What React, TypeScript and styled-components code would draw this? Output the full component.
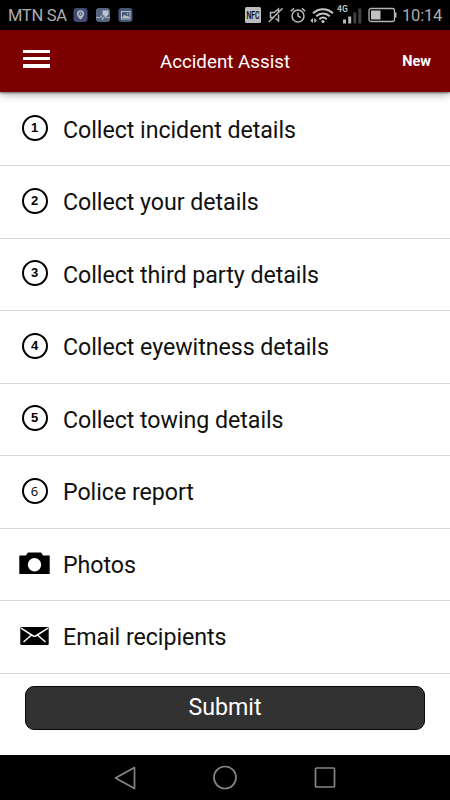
import React from "react";
import styled, { createGlobalStyle } from "styled-components";

const GlobalStyle = createGlobalStyle`
  * { box-sizing: border-box; }
  body { margin: 0; background: #fff; font-family: Roboto, "Liberation Sans", sans-serif; }
  svg { display: block; flex: none; overflow: visible; }
`;

const Screen = styled.div`
  width: 450px;
  height: 800px;
  display: flex;
  flex-direction: column;
  overflow: hidden;
  background: #fff;
`;

const StatusBar = styled.div`
  height: 30px;
  flex: none;
  display: flex;
  align-items: center;
  justify-content: space-between;
  padding: 0 7px 0 8px;
  background: #000;
  color: #adadad;
  font-size: 16.5px;
`;

const Notifications = styled.div`
  display: flex;
  align-items: center;
`;

const Carrier = styled.span`
  width: 65px;
  padding-top: 2px;
  line-height: 20px;
  white-space: nowrap;
  letter-spacing: -0.3px;
`;

const Clock = styled.span`
  width: 41px;
  margin-left: 5px;
  padding-top: 2px;
  line-height: 20px;
  white-space: nowrap;
  letter-spacing: -0.2px;
`;

const Header = styled.header`
  height: 62px;
  flex: none;
  display: grid;
  grid-template-columns: 100px 1fr 100px;
  align-items: center;
  position: relative;
  background: #7c0000;
  color: #fff;
  box-shadow: 0 1px 2px rgba(0, 0, 0, 0.5), 0 2px 9px rgba(0, 0, 0, 0.35);
`;

const MenuButton = styled.button`
  border: 0;
  padding: 0 0 4px 23px;
  background: none;
`;

const Title = styled.h1`
  margin: 0;
  padding-top: 2px;
  text-align: center;
  font-size: 18.8px;
  font-weight: 400;
  line-height: 24px;
`;

const NewButton = styled.button`
  border: 0;
  padding: 2px 19px 0 0;
  background: none;
  color: #fff;
  text-align: right;
  font: 700 14.5px/20px Roboto, sans-serif;
`;

const List = styled.ul`
  margin: 0;
  padding: 1.5px 0 0;
  list-style: none;
`;

const Item = styled.li`
  height: 72.5px;
  display: grid;
  grid-template-columns: 63px 1fr;
  align-items: center;
  border-bottom: 1px solid #d8d8d8;
  color: #111;
`;

const Symbol = styled.span`
  padding: 0 0 2px 6px;
  display: flex;
  justify-content: center;
`;

const NumberRing = styled.span<{ $light?: boolean }>`
  width: 26px;
  height: 26px;
  border: 2px solid #000;
  border-radius: 50%;
  display: flex;
  align-items: center;
  justify-content: center;
  color: #000;
  font: ${(p) => (p.$light ? "400 13px" : "700 13px")} / 22px
    ${(p) => (p.$light ? '"Open Sans"' : '"Liberation Sans"')}, sans-serif;
`;

const Label = styled.span`
  padding-top: 1px;
  font-size: 23.2px;
  line-height: 30px;
  letter-spacing: -0.04px;
  white-space: nowrap;
`;

const Footer = styled.div`
  flex: 1;
  padding: 12px 25px 0;
`;

const SubmitButton = styled.button`
  width: 400px;
  height: 44px;
  display: block;
  padding: 0 0 1px;
  border: 1px solid #080808;
  border-radius: 9px;
  background: #323232;
  color: #fff;
  font: 400 23.2px/30px Roboto, sans-serif;
`;

const NavBar = styled.nav`
  height: 45px;
  flex: none;
  display: flex;
  justify-content: center;
  align-items: center;
  gap: 76px;
  background: #000;
`;

const steps = [
  "Collect incident details",
  "Collect your details",
  "Collect third party details",
  "Collect eyewitness details",
  "Collect towing details",
  "Police report",
];

const NotificationIcons = () => (
  <svg width="61" height="16" viewBox="0 0 61 16">
    <rect x="0.5" y="1" width="14" height="14" rx="3" fill="#414b73" />
    <path d="M7.5 3.2a3.6 3.6 0 0 0-3.6 3.6c0 2.6 3.6 6 3.6 6s3.6-3.4 3.6-6a3.6 3.6 0 0 0-3.6-3.6z" fill="#b7bac7" />
    <circle cx="7.5" cy="6.8" r="1.5" fill="none" stroke="#414b73" />
    <rect x="23" y="1" width="14" height="14" rx="3" fill="#566580" />
    <path d="M29.5 3.5h6v4l-3 2.5-3-2.5z" fill="#bdc5d0" />
    <path d="M23 10.5h4l1.3-2 1.3 4.5 2-4.5.8 2H37" stroke="#a4afbf" fill="none" />
    <rect x="45.5" y="1" width="14" height="14" rx="3" fill="#455876" />
    <rect x="48.5" y="4.5" width="8.5" height="7.5" fill="none" stroke="#bdc1c9" />
    <path d="M49 11l2.5-3.5 2 2 1-1L57 11z" fill="#bdc1c9" />
    <circle cx="54.5" cy="6.7" r=".8" fill="#bdc1c9" />
  </svg>
);

const NfcIcon = () => (
  <svg width="16" height="16" viewBox="0 0 16 16">
    <rect width="16" height="16" rx="1.5" fill="#bdbdbd" />
    <text x="1.5" y="12" fontFamily="Roboto" fontWeight="500" fontSize="11" textLength="13" lengthAdjust="spacingAndGlyphs">NFC</text>
  </svg>
);

const MuteIcon = () => (
  <svg width="16" height="18" viewBox="0 0 16 18" fill="none" stroke="#b5b5b5">
    <path d="M6 11.500H2.500v-5H6L10.500 3v3.500M7.500 12.500l3 2.500V8.500" strokeWidth="1.500" />
    <path d="M.8 16 14.500 2.200" strokeWidth="1.500" />
  </svg>
);

const AlarmIcon = () => (
  <svg width="16" height="17" viewBox="0 0 16 17" fill="none" stroke="#bcbcbc" strokeWidth="1.5">
    <circle cx="8" cy="9" r="6" />
    <path d="M.8 4.2 4 1.4M12 1.4l3.2 2.8M8 5.5V9l2.7 1.6" />
  </svg>
);

const WifiIcon = () => (
  <svg width="24" height="17" viewBox="0 0 24 17">
    <path d="M2 6.3c5.8-5.5 14.2-5.5 20 0M5.2 9.3c4-3.7 9.6-3.7 13.6 0M8.3 12.2c2.2-2 5.2-2 7.4 0" stroke="#c5c5c5" strokeWidth="2" fill="none" />
    <circle cx="12" cy="14.5" r="1.6" fill="#c5c5c5" />
    <path d="M-.8 13.500 2 11v5zM6 13.500 3.200 11v5z" fill="#bbb" />
  </svg>
);

const SignalIcon = () => (
  <svg width="26" height="22" viewBox="0 0 26 22">
    <text x="-1" y="8" fontFamily="Roboto" fontWeight="700" fontSize="8.500" fill="#bbb">4G</text>
    <path d="M5 15.500h3v4H5zM10.200 12.500h3v7h-3z" fill="#bbb" />
    <path d="M15.300 8.500h3v11h-3zM20.300 4.500h3v15h-3z" fill="#414141" />
  </svg>
);

const BatteryIcon = () => (
  <svg width="28" height="16" viewBox="0 0 28 16">
    <rect x="0" y="1.500" width="25.500" height="13" rx="2" fill="none" stroke="#b5b5b5" strokeWidth="1.3" />
    <rect x="2" y="3.500" width="9.500" height="9" fill="#c2c2c2" />
    <path d="M26 5.500h1.500v5H26z" fill="#b5b5b5" />
  </svg>
);

const StatusIcons = styled.div`
  display: flex;
  align-items: center;
  & > svg:nth-of-type(2) { margin-left: 7px; }
  & > svg:nth-of-type(3) { margin-left: 6px; }
  & > svg:nth-of-type(4) { margin-left: 5px; }
  & > svg:nth-of-type(5) { margin-left: 3px; }
  & > svg:nth-of-type(6) { margin-left: 5px; }
`;

const CameraIcon = () => (
  <svg width="32" height="24" viewBox="0 0 32 24">
    <path fillRule="evenodd" d="M.3 4.400h6.500L9 1.500h13l2.200 2.900h6.500V23H.3zM15.500 7a6.700 6.700 0 1 0 0 13.400A6.700 6.700 0 0 0 15.500 7z" />
  </svg>
);

const MailIcon = () => (
  <svg width="30" height="20" viewBox="0 0 30 20">
    <rect x=".3" y="1" width="28.400" height="18" rx="1" />
    <path d="M1 2.200 12.500 9.500q2 1.300 4 0L28 2.200M3.500 16l7.500-6.500M25.500 16l-7.500-6.500" stroke="#fff" strokeWidth="1.500" fill="none" />
  </svg>
);

export default function App() {
  return (
    <Screen>
      <GlobalStyle />
      <StatusBar>
        <Notifications>
          <Carrier>MTN SA</Carrier>
          <NotificationIcons />
        </Notifications>
        <StatusIcons>
          <NfcIcon />
          <MuteIcon />
          <AlarmIcon />
          <WifiIcon />
          <SignalIcon />
          <BatteryIcon />
          <Clock>10:14</Clock>
        </StatusIcons>
      </StatusBar>
      <Header>
        <MenuButton aria-label="Menu">
          <svg width="27" height="18" viewBox="0 0 27 18" fill="#fff">
            <path d="M0 0h27v3H0zM0 7h27v3H0zM0 14h27v4H0z" />
          </svg>
        </MenuButton>
        <Title>Accident Assist</Title>
        <NewButton>New</NewButton>
      </Header>
      <List>
        {steps.map((step, i) => (
          <Item key={step}>
            <Symbol><NumberRing $light={i === 5}>{i + 1}</NumberRing></Symbol>
            <Label>{step}</Label>
          </Item>
        ))}
        <Item><Symbol><CameraIcon /></Symbol><Label>Photos</Label></Item>
        <Item><Symbol><MailIcon /></Symbol><Label>Email recipients</Label></Item>
      </List>
      <Footer><SubmitButton>Submit</SubmitButton></Footer>
      <NavBar>
        <svg width="24" height="26" viewBox="0 0 24 26" fill="none" stroke="#858585" strokeWidth="1.700">
          <path d="M2.500 13 21.500 2.500v21z" strokeLinejoin="round" />
        </svg>
        <svg width="24" height="26" viewBox="0 0 24 26" fill="none" stroke="#858585" strokeWidth="1.700">
          <circle cx="12" cy="12.500" r="11" />
        </svg>
        <svg width="24" height="26" viewBox="0 0 24 26" fill="none" stroke="#858585" strokeWidth="1.700">
          <rect x="2.500" y="3" width="19" height="19" rx="1" />
        </svg>
      </NavBar>
    </Screen>
  );
}
